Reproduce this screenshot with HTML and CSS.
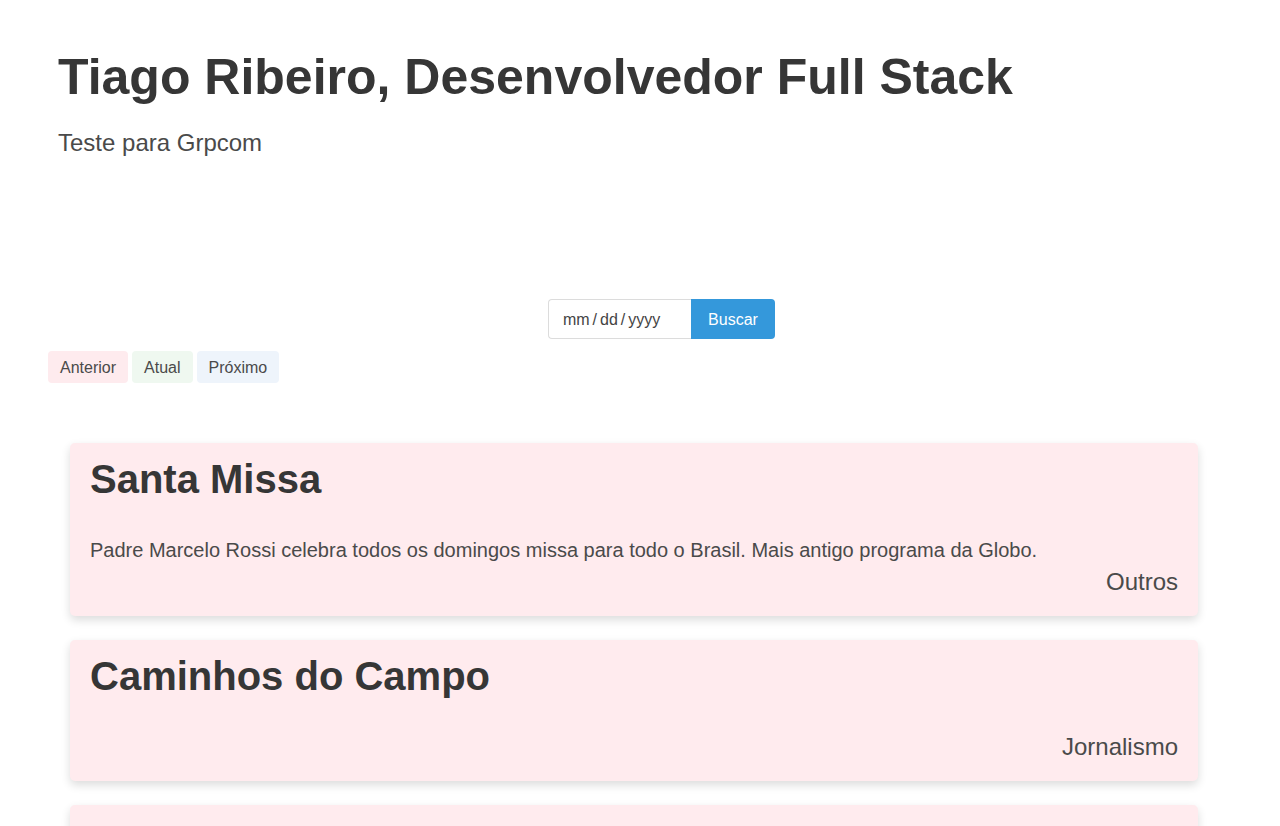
FILE: index.html
```html
<!DOCTYPE html>
<html lang="pt-BR">
<head>
<meta charset="utf-8">
<title>Tiago Ribeiro</title>
<link rel="stylesheet" href="styles.css">
</head>
<body>
<header class="hero">
  <h1 class="hero-title">Tiago Ribeiro, Desenvolvedor Full Stack</h1>
  <p class="hero-sub">Teste para Grpcom</p>
</header>
<form class="search">
  <input class="search-date" type="text" placeholder="mm / dd / yyyy">
  <button class="search-btn" type="button">Buscar</button>
</form>
<div class="legend">
  <span class="tag tag-prev">Anterior</span>
  <span class="tag tag-now">Atual</span>
  <span class="tag tag-next">Próximo</span>
</div>
<main class="list">
  <article class="card">
    <h2 class="card-title">Santa Missa</h2>
    <p class="card-desc">Padre Marcelo Rossi celebra todos os domingos missa para todo o Brasil. Mais antigo programa da Globo.</p>
    <p class="card-cat">Outros</p>
  </article>
  <article class="card">
    <h2 class="card-title">Caminhos do Campo</h2>
    <p class="card-desc"></p>
    <p class="card-cat">Jornalismo</p>
  </article>
  <article class="card card-next"></article>
</main>
</body>
</html>
```
FILE: styles.css
```css
html, body {
  margin: 0;
  padding: 0;
  background: #fff;
  font-family: "Liberation Sans", Arial, sans-serif;
  color: #373737;
}
.hero {
  padding: 47px 58px 0;
}
.hero-title {
  margin: 0;
  font-size: 50px;
  line-height: 60px;
  font-weight: 700;
  color: #363636;
}
.hero-sub {
  margin: 18px 0 0;
  font-size: 24px;
  line-height: 36px;
  color: #4a4a4a;
}
.search {
  display: flex;
  justify-content: center;
  padding-left: 43px;
  margin: 138px 0 0;
}
.search-date {
  box-sizing: border-box;
  width: 143px;
  height: 40px;
  border: 1px solid #dcdcdc;
  border-right: none;
  border-radius: 4px 0 0 4px;
  padding: 1px 14px 0;
  font-family: inherit;
  font-size: 16px;
  word-spacing: -1.5px;
  color: #444;
  outline: none;
}
.search-date::placeholder {
  color: #444;
  opacity: 1;
}
.search-btn {
  box-sizing: border-box;
  width: 84px;
  height: 40px;
  border: none;
  border-radius: 0 4px 4px 0;
  background: #3498db;
  color: #fff;
  font-family: inherit;
  font-size: 16px;
  padding: 1px 0 0;
}
.legend {
  display: flex;
  gap: 4px;
  margin: 12px 0 0 48px;
}
.tag {
  display: block;
  height: 32px;
  line-height: 33px;
  padding: 0 12px;
  border-radius: 4px;
  font-size: 16px;
  color: #4a4a4a;
}
.tag-prev { background: #feebee; }
.tag-now { background: #eff8f0; }
.tag-next { background: #eef4fb; }
.list {
  display: flex;
  flex-direction: column;
  gap: 24px;
  margin: 60px 82px 0 70px;
}
.card {
  display: flex;
  flex-direction: column;
  background: #ffebee;
  border-radius: 5px;
  padding: 12px 20px 20px;
  box-shadow: 0 4px 10px rgba(0, 0, 0, 0.14);
}
.card-next {
  height: 60px;
  box-sizing: border-box;
}
.card-title {
  margin: 0 0 32px;
  font-size: 40px;
  line-height: 48px;
  font-weight: 700;
  color: #363636;
}
.card-desc {
  margin: 0;
  font-size: 20px;
  line-height: 30px;
  color: #4a4a4a;
}
.card-desc:empty {
  height: 0;
}
.card-cat {
  margin: 2px 0 0;
  text-align: right;
  font-size: 24px;
  line-height: 29px;
  color: #4a4a4a;
}
.card-desc:empty + .card-cat {
  margin-top: 0;
}
```
